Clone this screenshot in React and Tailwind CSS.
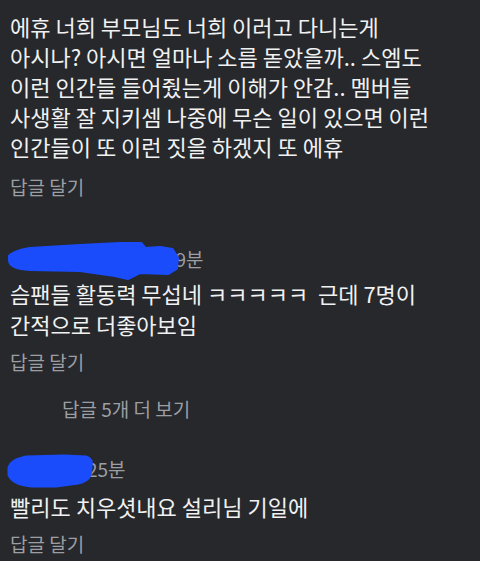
import React from "react";

const FONT = { fontFamily: '"Noto Sans CJK KR", "Noto Sans", sans-serif' };

// blue marker scribbles hiding the usernames
function Scribble({ variant }) {
  if (variant === "long") {
    return (
      <svg width="184" height="40" viewBox="0 0 184 40" className="absolute left-0 -top-[1px]">
        <path
          d="M4 14 C 10 9, 18 8, 24 7 L74 4 L134 1 L139 7 L154 6 L166 8 L171 16 L170 26 L162 31 L134 30 L122 36 L109 33 L74 28 L24 27 C 12 26, 4 24, 4 18 Z"
          fill="#1a4cfb"
          stroke="#1a4cfb"
          strokeWidth="4"
          strokeLinejoin="round"
        />
      </svg>
    );
  }
  return (
    <svg width="104" height="36" viewBox="0 0 104 36" className="absolute left-0 top-0">
      <path
        d="M3 15 C 5 8, 12 6, 20 4 L58 3 L80 4 C 86 6, 86 10, 85 14 L84 22 C 82 27, 78 29, 72 30 L50 33 L25 33 C 14 32, 6 29, 3 22 Z"
        fill="#1a4cfb"
        stroke="#1a4cfb"
        strokeWidth="3"
        strokeLinejoin="round"
      />
    </svg>
  );
}

function ReplyLink({ className = "" }) {
  return <div className={`text-[19px] leading-[24px] text-[#9c9ea3] ${className}`}>답글 달기</div>;
}

function CommentHeader({ time, offset, variant }) {
  return (
    <div className="relative h-[32px] flex items-center text-[19px] text-[#9c9ea3]">
      <span className={offset}>{time}</span>
      <Scribble variant={variant} />
    </div>
  );
}

export default function App() {
  return (
    <div className="w-[480px] h-[561px] overflow-hidden bg-[#26282c] px-[10px] pt-[11px]" style={FONT}>
      <p className="text-[22px] leading-[30px] text-[#f1f1f2]">
        에휴 너희 부모님도 너희 이러고 다니는게
        <br />
        아시나? 아시면 얼마나 소름 돋았을까.. 스엠도
        <br />
        이런 인간들 들어줬는게 이해가 안감.. 멤버들
        <br />
        사생활 잘 지키셈 나중에 무슨 일이 있으면 이런
        <br />
        인간들이 또 이런 짓을 하겠지 또 에휴
      </p>
      <ReplyLink className="mt-[14px]" />

      <div className="mt-[44px] -ml-[4px]">
        <CommentHeader time="39분" offset="pl-[159px]" variant="long" />
      </div>
      <p className="mt-[3px] text-[22px] leading-[31px] text-[#f1f1f2] whitespace-pre-wrap">
        {"슴팬들 활동력 무섭네 ㅋㅋㅋㅋㅋ  근데 7명이\n간적으로 더좋아보임"}
      </p>
      <ReplyLink className="mt-[10px]" />

      <div className="mt-[23px] pl-[52px] text-[19px] leading-[24px] text-[#9c9ea3]">답글 5개 더 보기</div>

      <div className="mt-[32px] -ml-[4px]">
        <CommentHeader time="25분" offset="pl-[81px]" variant="short" />
      </div>
      <p className="mt-[6px] text-[22px] leading-[30px] text-[#f1f1f2]">빨리도 치우셧내요 설리님 기일에</p>
      <ReplyLink className="mt-[11px]" />
    </div>
  );
}
